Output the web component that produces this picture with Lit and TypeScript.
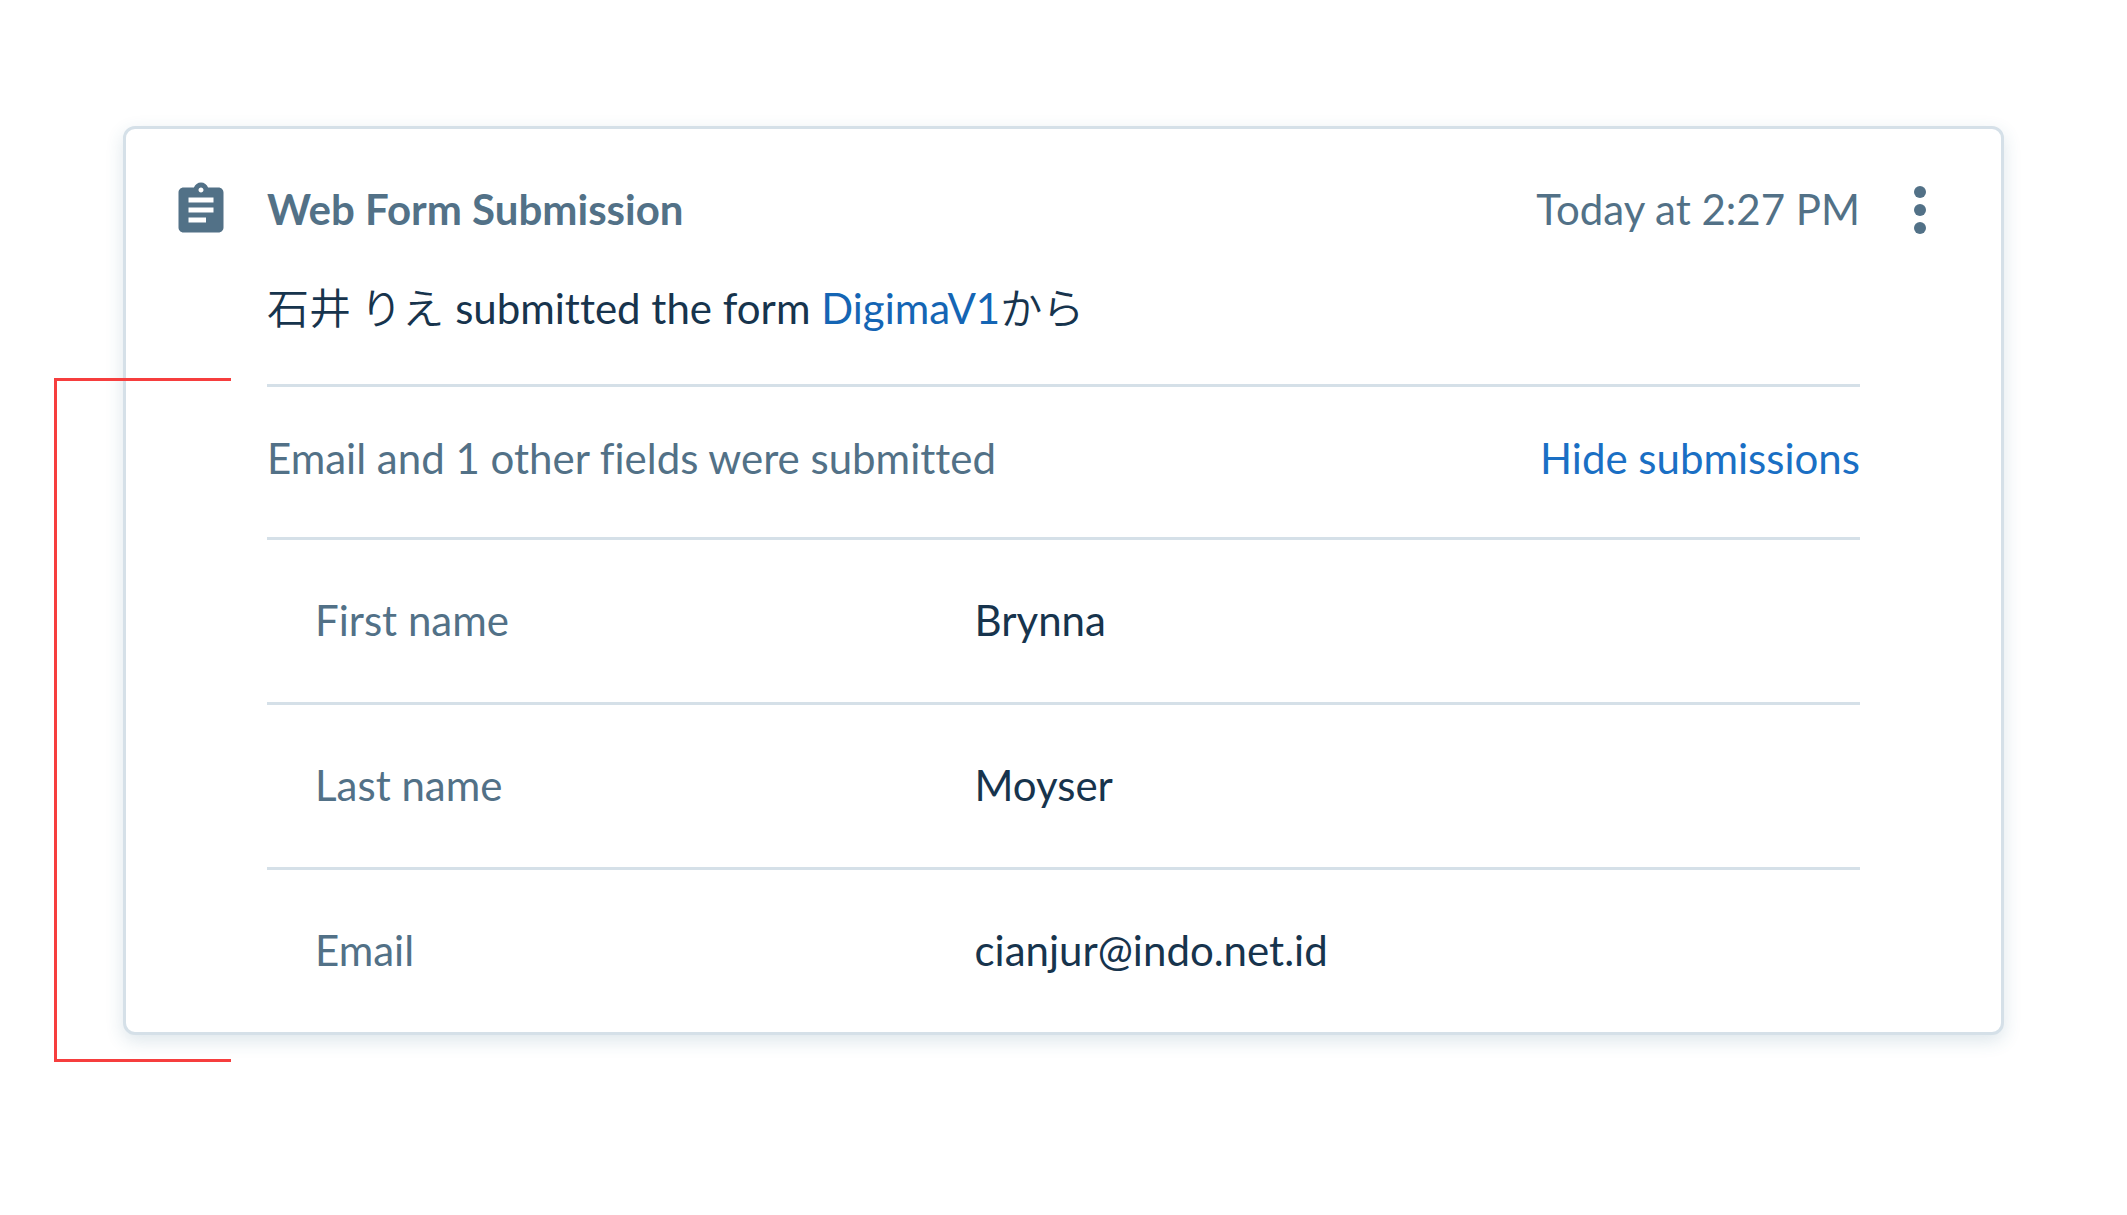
import { LitElement, html, css } from "lit";
import { customElement, state } from "lit/decorators.js";

interface Field {
  label: string;
  value: string;
}

@customElement("app-root")
export class AppRoot extends LitElement {
  static styles = css`
    :host {
      display: block;
      box-sizing: border-box;
      min-height: 100vh;
      padding: 126px 123px;
      background: #ffffff;
      color: #17344d;
      font-family: Lato, "Noto Sans CJK JP", sans-serif;
      font-size: 42px;
      font-variant-ligatures: none;
      line-height: 60px;
    }
    .card {
      display: grid;
      grid-template-columns: 60px 1fr 72px;
      column-gap: 36px;
      padding: 45px 45px 0;
      border: 3px solid #d5e0e8;
      border-radius: 12px;
      background: #ffffff;
      box-shadow: 0 6px 18px rgba(45, 100, 130, 0.16);
    }
    .icon {
      display: block;
      width: 60px;
      height: 60px;
      margin-top: 6px;
      fill: #527187;
    }
    .content {
      margin-right: -12px;
    }
    .head {
      display: flex;
      justify-content: space-between;
      padding: 5px 0 7px;
      color: #527187;
    }
    .title {
      margin: 0;
      font-size: 42px;
      font-weight: 700;
    }
    .menu {
      display: block;
      width: 72px;
      height: 72px;
      padding: 0;
      border: 0;
      background: none;
      cursor: pointer;
    }
    .dots {
      display: block;
      width: 72px;
      height: 72px;
      fill: #527187;
    }
    .message {
      margin: 32px 0 46px;
    }
    .message [lang="ja"] {
      font-family: "Noto Sans CJK JP", sans-serif;
      font-weight: 350;
      line-height: 42px;
    }
    .message a {
      color: #1465b4;
      text-decoration: none;
    }
    .details {
      position: relative;
    }
    .summary {
      display: flex;
      align-items: center;
      justify-content: space-between;
      padding: 41px 0 49px;
      border-top: 3px solid #d5e0e8;
      color: #527187;
    }
    .toggle {
      padding: 0;
      border: 0;
      background: none;
      color: #1a6fc4;
      font: inherit;
      font-variant-ligatures: none;
      cursor: pointer;
    }
    .fields {
      width: 100%;
      border-spacing: 0;
      table-layout: fixed;
    }
    .fields th,
    .fields td {
      padding: 50px 48px 52px;
      border-top: 3px solid #d5e0e8;
      font-weight: 400;
      text-align: left;
    }
    .fields th {
      box-sizing: border-box;
      width: 41.4%;
      color: #527187;
    }
    .bracket {
      position: absolute;
      top: -6px;
      bottom: -30px;
      left: -213px;
      width: 174px;
      border: 3px solid #f63e3e;
      border-right: 0;
      pointer-events: none;
    }
  `;

  @state() private open = true;

  private fields: Field[] = [
    { label: "First name", value: "Brynna" },
    { label: "Last name", value: "Moyser" },
    { label: "Email", value: "cianjur@indo.net.id" },
  ];

  private toggle() {
    this.open = !this.open;
  }

  render() {
    return html`
      <article class="card">
        <svg class="icon" viewBox="0 0 24 24" aria-hidden="true">
          <path
            d="M19 3h-4.18C14.4 1.84 13.3 1 12 1c-1.3 0-2.4.84-2.82 2H5c-1.1 0-2 .9-2 2v14c0 1.1.9 2 2 2h14c1.1 0 2-.9 2-2V5c0-1.1-.9-2-2-2zm-7 0c.55 0 1 .45 1 1s-.45 1-1 1-1-.45-1-1 .45-1 1-1zm2 14H7v-2h7v2zm3-4H7v-2h10v2zm0-4H7V7h10v2z"
          />
        </svg>
        <div class="content">
          <header class="head">
            <h2 class="title">Web Form Submission</h2>
            <time>Today at 2:27 PM</time>
          </header>
          <p class="message">
            <span lang="ja">石井 りえ</span> submitted the form <a href="#form">DigimaV1</a><span lang="ja">から</span>
          </p>
          <section class="details">
            <div class="summary">
              <span>Email and 1 other fields were submitted</span>
              <button class="toggle" type="button" aria-expanded=${this.open ? "true" : "false"} @click=${this.toggle}>
                ${this.open ? "Hide submissions" : "Show submissions"}
              </button>
            </div>
            ${this.open
              ? html`<table class="fields">
                  <tbody>
                    ${this.fields.map(
                      (f) => html`<tr>
                        <th scope="row">${f.label}</th>
                        <td>${f.value}</td>
                      </tr>`
                    )}
                  </tbody>
                </table>`
              : null}
            <div class="bracket"></div>
          </section>
        </div>
        <button class="menu" type="button" aria-label="More actions">
          <svg class="dots" viewBox="0 0 24 24" aria-hidden="true">
            <circle cx="12" cy="6" r="2" />
            <circle cx="12" cy="12" r="2" />
            <circle cx="12" cy="18" r="2" />
          </svg>
        </button>
      </article>
    `;
  }
}
